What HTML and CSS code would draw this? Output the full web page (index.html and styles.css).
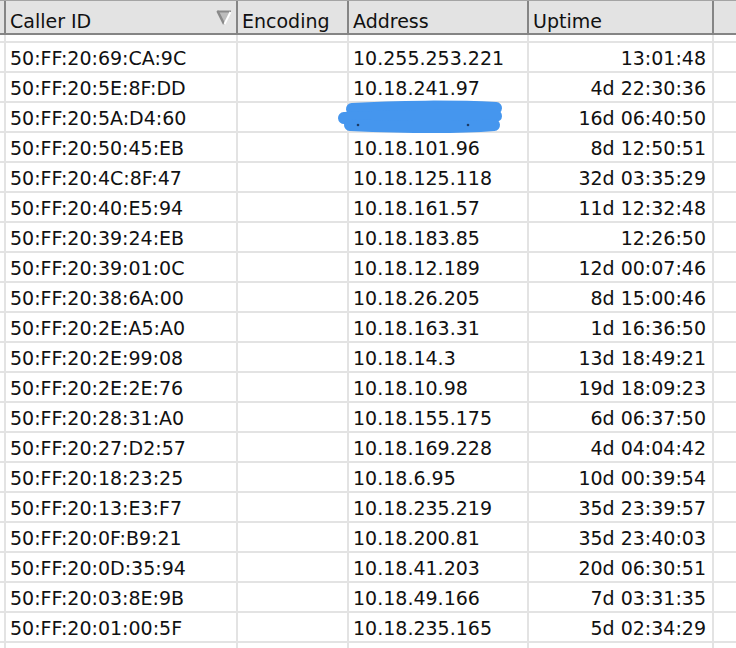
FILE: index.html
```html
<!DOCTYPE html>
<html>
<head>
<meta charset="utf-8">
<link rel="stylesheet" href="styles.css">
</head>
<body>
<div class="list">
  <div class="row head">
    <div class="cell stub"></div>
    <div class="cell c1">Caller ID
      <svg class="sort" width="16" height="16" viewBox="0 0 16 16">
        <polygon points="1,1 15,1 8,15" fill="#bdbdbd"/>
        <polyline points="1,1.5 15,1.5" stroke="#8a8a8a" stroke-width="2" fill="none"/>
        <polyline points="1.5,1 8,14" stroke="#8a8a8a" stroke-width="2.5" fill="none"/>
        <polyline points="14.5,2 8.5,14" stroke="#ffffff" stroke-width="2" fill="none"/>
      </svg>
    </div>
    <div class="cell c2">Encoding</div>
    <div class="cell c3">Address</div>
    <div class="cell c4">Uptime</div>
    <div class="cell fill"></div>
  </div>
  <div class="row spacer">
    <div class="cell stub"></div><div class="cell c1"></div><div class="cell c2"></div><div class="cell c3"></div><div class="cell c4"></div><div class="cell fill"></div>
  </div>
  <div class="row"><div class="cell stub"></div><div class="cell c1">50:FF:20:69:CA:9C</div><div class="cell c2"></div><div class="cell c3">10.255.253.221</div><div class="cell c4 num">13:01:48</div><div class="cell fill"></div></div>
  <div class="row"><div class="cell stub"></div><div class="cell c1">50:FF:20:5E:8F:DD</div><div class="cell c2"></div><div class="cell c3">10.18.241.97</div><div class="cell c4 num">4d 22:30:36</div><div class="cell fill"></div></div>
  <div class="row"><div class="cell stub"></div><div class="cell c1">50:FF:20:5A:D4:60</div><div class="cell c2"></div><div class="cell c3 hidden">10.18.xxx.xx</div><div class="cell c4 num">16d 06:40:50</div><div class="cell fill"></div></div>
  <div class="row"><div class="cell stub"></div><div class="cell c1">50:FF:20:50:45:EB</div><div class="cell c2"></div><div class="cell c3">10.18.101.96</div><div class="cell c4 num">8d 12:50:51</div><div class="cell fill"></div></div>
  <div class="row"><div class="cell stub"></div><div class="cell c1">50:FF:20:4C:8F:47</div><div class="cell c2"></div><div class="cell c3">10.18.125.118</div><div class="cell c4 num">32d 03:35:29</div><div class="cell fill"></div></div>
  <div class="row"><div class="cell stub"></div><div class="cell c1">50:FF:20:40:E5:94</div><div class="cell c2"></div><div class="cell c3">10.18.161.57</div><div class="cell c4 num">11d 12:32:48</div><div class="cell fill"></div></div>
  <div class="row"><div class="cell stub"></div><div class="cell c1">50:FF:20:39:24:EB</div><div class="cell c2"></div><div class="cell c3">10.18.183.85</div><div class="cell c4 num">12:26:50</div><div class="cell fill"></div></div>
  <div class="row"><div class="cell stub"></div><div class="cell c1">50:FF:20:39:01:0C</div><div class="cell c2"></div><div class="cell c3">10.18.12.189</div><div class="cell c4 num">12d 00:07:46</div><div class="cell fill"></div></div>
  <div class="row"><div class="cell stub"></div><div class="cell c1">50:FF:20:38:6A:00</div><div class="cell c2"></div><div class="cell c3">10.18.26.205</div><div class="cell c4 num">8d 15:00:46</div><div class="cell fill"></div></div>
  <div class="row"><div class="cell stub"></div><div class="cell c1">50:FF:20:2E:A5:A0</div><div class="cell c2"></div><div class="cell c3">10.18.163.31</div><div class="cell c4 num">1d 16:36:50</div><div class="cell fill"></div></div>
  <div class="row"><div class="cell stub"></div><div class="cell c1">50:FF:20:2E:99:08</div><div class="cell c2"></div><div class="cell c3">10.18.14.3</div><div class="cell c4 num">13d 18:49:21</div><div class="cell fill"></div></div>
  <div class="row"><div class="cell stub"></div><div class="cell c1">50:FF:20:2E:2E:76</div><div class="cell c2"></div><div class="cell c3">10.18.10.98</div><div class="cell c4 num">19d 18:09:23</div><div class="cell fill"></div></div>
  <div class="row"><div class="cell stub"></div><div class="cell c1">50:FF:20:28:31:A0</div><div class="cell c2"></div><div class="cell c3">10.18.155.175</div><div class="cell c4 num">6d 06:37:50</div><div class="cell fill"></div></div>
  <div class="row"><div class="cell stub"></div><div class="cell c1">50:FF:20:27:D2:57</div><div class="cell c2"></div><div class="cell c3">10.18.169.228</div><div class="cell c4 num">4d 04:04:42</div><div class="cell fill"></div></div>
  <div class="row"><div class="cell stub"></div><div class="cell c1">50:FF:20:18:23:25</div><div class="cell c2"></div><div class="cell c3">10.18.6.95</div><div class="cell c4 num">10d 00:39:54</div><div class="cell fill"></div></div>
  <div class="row"><div class="cell stub"></div><div class="cell c1">50:FF:20:13:E3:F7</div><div class="cell c2"></div><div class="cell c3">10.18.235.219</div><div class="cell c4 num">35d 23:39:57</div><div class="cell fill"></div></div>
  <div class="row"><div class="cell stub"></div><div class="cell c1">50:FF:20:0F:B9:21</div><div class="cell c2"></div><div class="cell c3">10.18.200.81</div><div class="cell c4 num">35d 23:40:03</div><div class="cell fill"></div></div>
  <div class="row"><div class="cell stub"></div><div class="cell c1">50:FF:20:0D:35:94</div><div class="cell c2"></div><div class="cell c3">10.18.41.203</div><div class="cell c4 num">20d 06:30:51</div><div class="cell fill"></div></div>
  <div class="row"><div class="cell stub"></div><div class="cell c1">50:FF:20:03:8E:9B</div><div class="cell c2"></div><div class="cell c3">10.18.49.166</div><div class="cell c4 num">7d 03:31:35</div><div class="cell fill"></div></div>
  <div class="row"><div class="cell stub"></div><div class="cell c1">50:FF:20:01:00:5F</div><div class="cell c2"></div><div class="cell c3">10.18.235.165</div><div class="cell c4 num">5d 02:34:29</div><div class="cell fill"></div></div>
  <div class="row"><div class="cell stub"></div><div class="cell c1"></div><div class="cell c2"></div><div class="cell c3"></div><div class="cell c4"></div><div class="cell fill"></div></div>

  <svg class="scribble" width="172" height="36" viewBox="0 0 172 36">
    <g stroke="#4596ee" stroke-linecap="round" stroke-linejoin="round" fill="none">
      <path d="M16 9 C60 6, 120 6, 160 8" stroke-width="12"/>
      <path d="M8 18 C50 16, 120 15, 160 16" stroke-width="12"/>
      <path d="M14 25 C60 27, 120 28, 158 25" stroke-width="12"/>
    </g>
    <circle cx="22" cy="25" r="1.3" fill="#1c3c66"/>
    <circle cx="132" cy="25" r="1.3" fill="#1c3c66"/>
  </svg>
</div>
</body>
</html>
```
FILE: styles.css
```css
html, body {
  margin: 0;
  padding: 0;
  background: #ffffff;
}
body {
  width: 736px;
  height: 648px;
  overflow: hidden;
  font-family: "DejaVu Sans", Verdana, sans-serif;
  font-size: 19px;
  color: #111;
}
.list {
  position: relative;
}
.row {
  display: grid;
  grid-template-columns: 6px 232px 111px 180px 185px 1fr;
  height: 30px;
  border-top: 2px solid #e3e3e3;
  box-sizing: border-box;
}
.cell {
  box-sizing: border-box;
  border-right: 2px solid #e3e3e3;
  display: flex;
  align-items: center;
  padding: 2px 4px 0 4px;
  white-space: nowrap;
  overflow: hidden;
}
.cell.stub { padding: 0; }
.cell.fill { border-right: none; }
.cell.num { justify-content: flex-end; padding-right: 6px; }
.hidden { color: transparent; }

.row.head {
  height: 35px;
  border-top: 1px solid #a4a4a4;
  border-bottom: 2px solid #858585;
  background: #e3e3e3;
}
.row.head .cell {
  border-right-color: #858585;
  padding-top: 7px;
}
.row.head .cell.c1 {
  justify-content: space-between;
  padding-right: 4px;
}
.sort {
  margin-bottom: 6px;
  flex: none;
}
.row.spacer {
  height: 6px;
  border-top: none;
}
.scribble {
  position: absolute;
  left: 336px;
  top: 100px;
}
```
